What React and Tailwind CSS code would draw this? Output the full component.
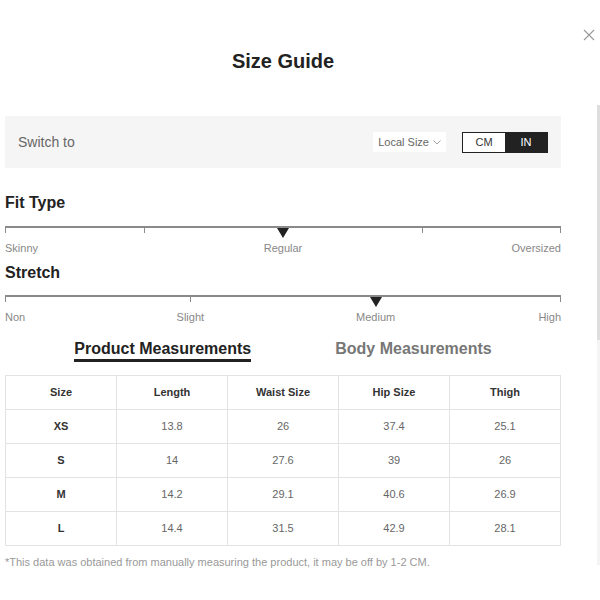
import React, { useState } from "react";

const ROWS = [
  { size: "XS", length: "13.8", waist: "26", hip: "37.4", thigh: "25.1" },
  { size: "S", length: "14", waist: "27.6", hip: "39", thigh: "26" },
  { size: "M", length: "14.2", waist: "29.1", hip: "40.6", thigh: "26.9" },
  { size: "L", length: "14.4", waist: "31.5", hip: "42.9", thigh: "28.1" },
];

function Scale({ ticks, marker, labels }) {
  return (
    <div>
      <div className="relative h-[12px] border-t-2 border-[#8a8a8a]">
        {ticks.map((t) => (
          <span
            key={t}
            className="absolute top-0 h-[5px] w-px bg-[#8a8a8a]"
            style={{ left: `${t * 100}%`, transform: t === 1 ? "translateX(-1px)" : "none" }}
          />
        ))}
        <span
          className="absolute top-0 h-0 w-0 border-x-[6px] border-t-[10px] border-x-transparent border-t-[#222]"
          style={{ left: `${marker * 100}%`, transform: "translateX(-6px)" }}
        />
      </div>
      <div className="relative mt-[2px] h-[14px] text-[11px] text-[#888]">
        {labels.map((l) => (
          <span
            key={l.text}
            className="absolute top-0 whitespace-nowrap"
            style={{
              left: `${l.at * 100}%`,
              transform: l.at === 0 ? "none" : l.at === 1 ? "translateX(-100%)" : "translateX(-50%)",
            }}
          >
            {l.text}
          </span>
        ))}
      </div>
    </div>
  );
}

export default function App() {
  const [unit, setUnit] = useState("IN");
  const [tab, setTab] = useState("product");

  return (
    <div className="relative h-[600px] w-[600px] overflow-hidden bg-white" style={{ fontFamily: '"Liberation Sans", Arial, sans-serif' }}>
      <button className="absolute right-[5px] top-[29px] text-[#999]">
        <svg width="12" height="12" viewBox="0 0 12 12" fill="none" stroke="currentColor" strokeWidth="1.1">
          <path d="M1 1L11 11M11 1L1 11" />
        </svg>
      </button>

      <div className="absolute right-0 top-[105px] flex h-[460px] w-[3px] flex-col bg-[#f4f4f4]">
        <div className="h-[235px] w-full bg-[#dedede]" />
      </div>

      <div className="ml-[5px] w-[556px]">
        <h1 className="pt-[50px] text-center text-[20px] font-bold leading-[23px] text-[#222]">Size Guide</h1>

        <div className="mt-[43px] flex h-[52px] items-center justify-between bg-[#f5f5f5] pl-[13px] pr-[13px]">
          <span className="text-[14px] text-[#666]">Switch to</span>
          <div className="flex items-center">
            <div className="flex h-[20px] items-center gap-[4px] bg-white px-[5px] text-[11px] text-[#666]">
              Local Size
              <svg width="8" height="5" viewBox="0 0 8 5" fill="none" stroke="#999" strokeWidth="0.9">
                <path d="M0.5 0.5L4 4L7.5 0.5" />
              </svg>
            </div>
            <div className="ml-[16px] flex h-[21px] border border-[#222] text-[11px]">
              {["CM", "IN"].map((u) => (
                <button
                  key={u}
                  onClick={() => setUnit(u)}
                  className={`w-[42px] ${unit === u ? "bg-[#222] text-white" : "bg-white text-[#333]"}`}
                >
                  {u}
                </button>
              ))}
            </div>
          </div>
        </div>

        <h2 className="mt-[26px] text-[16px] font-bold leading-[18px] text-[#222]">Fit Type</h2>
        <div className="mt-[14px]">
          <Scale
            ticks={[0, 0.25, 0.75, 1]}
            marker={0.5}
            labels={[
              { text: "Skinny", at: 0 },
              { text: "Regular", at: 0.5 },
              { text: "Oversized", at: 1 },
            ]}
          />
        </div>

        <h2 className="mt-[10px] text-[16px] font-bold leading-[18px] text-[#222]">Stretch</h2>
        <div className="mt-[13px]">
          <Scale
            ticks={[0, 1 / 3, 2 / 3, 1]}
            marker={2 / 3}
            labels={[
              { text: "Non", at: 0 },
              { text: "Slight", at: 1 / 3 },
              { text: "Medium", at: 2 / 3 },
              { text: "High", at: 1 },
            ]}
          />
        </div>

        <div className="mt-[16px] flex justify-center gap-[84px] text-[16px] font-bold">
          <button
            onClick={() => setTab("product")}
            className={`border-b-[3px] leading-[20px] ${tab === "product" ? "border-[#222] text-[#222]" : "border-transparent text-[#777]"}`}
          >
            Product Measurements
          </button>
          <button
            onClick={() => setTab("body")}
            className={`border-b-[3px] leading-[20px] ${tab === "body" ? "border-[#222] text-[#222]" : "border-transparent text-[#777]"}`}
          >
            Body Measurements
          </button>
        </div>

        <table className="mt-[13px] w-full table-fixed border-collapse text-[11px]">
          <thead>
            <tr className="h-[34px]">
              {["Size", "Length", "Waist Size", "Hip Size", "Thigh"].map((h) => (
                <th key={h} className="border border-[#e3e3e3] font-bold text-[#333]">
                  {h}
                </th>
              ))}
            </tr>
          </thead>
          <tbody>
            {ROWS.map((r) => (
              <tr key={r.size} className="h-[34px] text-center">
                <td className="border border-[#e3e3e3] font-bold text-[#333]">{r.size}</td>
                <td className="border border-[#e3e3e3] text-[#666]">{r.length}</td>
                <td className="border border-[#e3e3e3] text-[#666]">{r.waist}</td>
                <td className="border border-[#e3e3e3] text-[#666]">{r.hip}</td>
                <td className="border border-[#e3e3e3] text-[#666]">{r.thigh}</td>
              </tr>
            ))}
          </tbody>
        </table>

        <p className="mt-[8px] text-[11px] text-[#999]">
          *This data was obtained from manually measuring the product, it may be off by 1-2 CM.
        </p>
      </div>
    </div>
  );
}
